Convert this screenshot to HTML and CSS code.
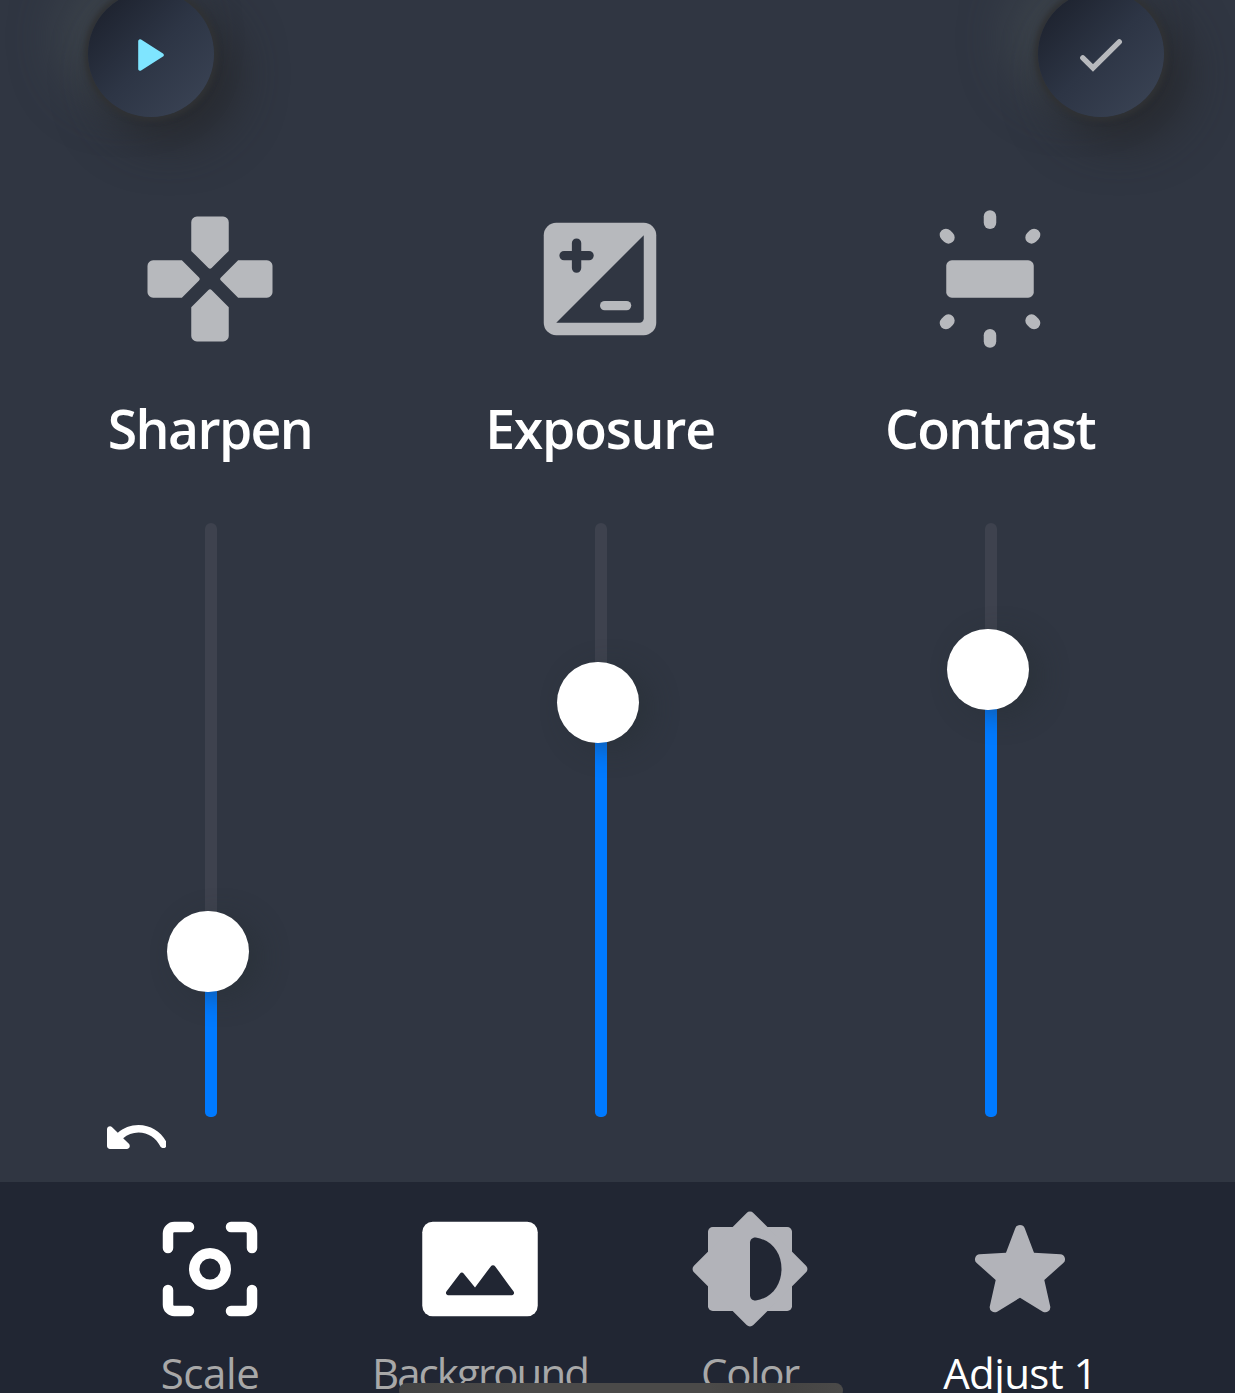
FILE: index.html
```html
<!DOCTYPE html>
<html lang="en">
<head>
<meta charset="utf-8">
<title>Adjust</title>
<link rel="stylesheet" href="styles.css">
</head>
<body>
<main class="editor">
  <header class="toolbar">
    <button class="round-btn" aria-label="Play">
      <svg viewBox="0 0 60 60"><path class="play" d="M17.200 17.100v27.800a1.900 1.900 0 0 0 2.900 1.600l21.900-13.900a1.900 1.900 0 0 0 0-3.200L20.100 15.500a1.900 1.900 0 0 0-2.900 1.600z"/></svg>
    </button>
    <button class="round-btn" aria-label="Done">
      <svg viewBox="0 0 60 60"><path class="check" d="M11.800 33.800 22 44 48.300 17.800"/></svg>
    </button>
  </header>

  <section class="controls">
    <div class="control">
      <svg class="control-icon" viewBox="0 0 24 24">
        <g id="pad"><path id="arm" d="M15 7.5V2.9a.9.9 0 0 0-.9-.9H9.9a.9.9 0 0 0-.9.9v4.6l2.75 2.75a.35.35 0 0 0 .5 0z"/><use href="#arm" transform="rotate(90 12 12)"/></g>
        <use href="#pad" transform="rotate(180 12 12)"/>
      </svg>
      <h2 class="control-name sharpen">Sharpen</h2>
      <div class="slider"><div class="fill" style="height:166px"></div><div class="thumb" style="bottom:125px"></div></div>
    </div>
    <div class="control">
      <svg class="control-icon" viewBox="0 0 24 24">
        <rect x="3" y="3" width="18" height="18" rx="2"/>
        <path class="cut" d="M5 19 19 5v13.3a.7.7 0 0 1-.7.7z"/>
        <path class="cut-line" d="M6.25 8.25h4M8.25 6.25v4"/>
        <rect x="12" y="15.5" width="5" height="1.5" rx=".75"/>
      </svg>
      <h2 class="control-name exposure">Exposure</h2>
      <div class="slider"><div class="fill" style="height:415px"></div><div class="thumb" style="bottom:374px"></div></div>
    </div>
    <div class="control">
      <svg class="control-icon" viewBox="0 0 24 24">
        <rect x="5" y="9" width="14" height="6" rx=".9"/>
        <rect x="11" y="1" width="2" height="3" rx="1"/>
        <rect x="11" y="20" width="2" height="3" rx="1"/>
        <path class="ray" d="m4.95 4.95.4.4M19.05 4.95l-.4.4M4.95 19.05l.4-.4M19.05 19.05l-.4-.4"/>
      </svg>
      <h2 class="control-name contrast">Contrast</h2>
      <div class="slider"><div class="fill" style="height:448px"></div><div class="thumb" style="bottom:407px"></div></div>
    </div>
  </section>

  <div class="undo-row">
    <button class="undo" aria-label="Undo">
      <svg viewBox="0 0 24 24"><path d="M12.5 8c-2.65 0-5.05.99-6.9 2.6L3.71 8.71C3.08 8.08 2 8.52 2 9.41V15c0 .55.45 1 1 1h5.59c.89 0 1.34-1.08.71-1.71l-1.91-1.91c1.39-1.16 3.16-1.88 5.12-1.88 3.16 0 5.89 1.84 7.19 4.5.27.56.91.84 1.5.64.71-.23 1.07-1.04.75-1.72C20.23 10.42 16.65 8 12.5 8z"/></svg>
    </button>
  </div>

  <nav class="tabs">
    <a class="tab bright">
      <svg viewBox="0 0 24 24"><path class="bracket" d="M4 8V5.2A1.2 1.2 0 0 1 5.2 4H8M16 4h2.8A1.2 1.2 0 0 1 20 5.2V8M20 16v2.8a1.2 1.2 0 0 1-1.2 1.2H16M8 20H5.2A1.2 1.2 0 0 1 4 18.8V16"/><circle class="bracket" cx="12" cy="12" r="3"/></svg>
      <span class="scale">Scale</span>
    </a>
    <a class="tab bright">
      <svg viewBox="0 0 24 24"><rect x="1" y="3" width="22" height="18" rx="2"/><path class="cut-nav" d="M5.6 16.3 8.2 12.85a.42.42 0 0 1 .68 0L11.05 15.5 14.05 11.5a.55.55 0 0 1 .85 0L18.4 16.3a.44.44 0 0 1-.3.7H5.9a.44.44 0 0 1-.3-.7z"/></svg>
      <span class="background">Background</span>
    </a>
    <a class="tab">
      <svg viewBox="0 0 24 24"><rect x="4" y="4" width="16" height="16" rx=".9"/><rect x="4" y="4" width="16" height="16" rx=".9" transform="rotate(45 12 12)"/><path class="cut-nav" d="M12 7v10c0 .6.45 1.05 1.1 1C16.3 17.5 18 14.9 18 12S16.3 6.5 13.1 6C12.45 5.95 12 6.4 12 7z"/></svg>
      <span class="color">Color</span>
    </a>
    <a class="tab active">
      <svg viewBox="0 0 24 24"><path d="M9.33 8.9 11.1 4.25a.96.96 0 0 1 1.8 0L14.67 8.9 19.7 9.2a.94.94 0 0 1 .55 1.65L16.63 14.1 17.75 19.1a.95.95 0 0 1-1.4 1.02L12 17.46 7.65 20.12a.95.95 0 0 1-1.4-1.02L7.37 14.1 3.75 10.85A.94.94 0 0 1 4.3 9.2z"/></svg>
      <span class="adjust">Adjust 1</span>
    </a>
  </nav>
  <div class="home-bar"></div>
</main>
</body>
</html>
```
FILE: styles.css
```css
* { box-sizing: border-box; }
body { margin: 0; background: #303642; }
button { border: 0; padding: 0; background: none; }
.editor {
  position: relative;
  width: 1235px;
  height: 1393px;
  overflow: hidden;
  display: flex;
  flex-direction: column;
  background: #303642;
  font-family: "Trebuchet MS", "Open Sans", "Noto Sans", sans-serif;
  color: #fff;
}
.toolbar {
  height: 204px;
  flex: none;
  display: flex;
  justify-content: space-between;
  align-items: flex-start;
  padding: 0 71px 0 88px;
}
.round-btn {
  width: 126px;
  height: 126px;
  margin-top: -9px;
  border-radius: 50%;
  display: grid;
  place-items: center;
  background: linear-gradient(135deg, #1d222e 10%, #2d3545 50%, #394253 90%);
  box-shadow: 0 0 5px 4px #303235, 18px 20px 46px 6px rgba(36, 38, 40, .75), -26px -16px 46px 4px rgba(68, 76, 82, .65);
}
.round-btn svg { width: 60px; height: 60px; }
.play { fill: #7fe5ff; }
.check { fill: none; stroke: #b7b9bd; stroke-width: 5.4; stroke-linecap: round; }

.controls { height: 913px; flex: none; display: flex; padding-left: 15px; }
.control {
  width: 390px;
  display: flex;
  flex-direction: column;
  align-items: center;
}
.control-icon { width: 150px; height: 150px; fill: #b7b9bd; }
.cut { fill: #303642; }
.cut-line { fill: none; stroke: #303642; stroke-width: 1.5; stroke-linecap: round; }
.ray { stroke: #b7b9bd; stroke-width: 2; stroke-linecap: round; }
.control-name {
  margin: 35px 0 1px;
  height: 80px;
  line-height: 80px;
  font-size: 53.5px;
  font-weight: 650;
  white-space: nowrap;
}
.sharpen { letter-spacing: -1.6px; }
.exposure { letter-spacing: -1.2px; }
.contrast { letter-spacing: -1.6px; }
.slider {
  position: relative;
  display: flex;
  align-items: flex-end;
  width: 12px;
  height: 594px;
  margin: 53px 0 0 2px;
  border-radius: 6px;
  background: #3e424e;
}
.fill { width: 12px; border-radius: 0 0 5px 5px; background: #007aff; }
.thumb {
  position: absolute;
  left: -37.7px;
  width: 81.5px;
  height: 81.5px;
  border-radius: 50%;
  background: #fff;
  box-shadow: 12px 6px 28px rgba(38, 46, 50, .45);
}

.undo-row { height: 65px; flex: none; padding-left: 101px; }
.undo { display: block; width: 65px; height: 60px; margin-top: -16px; overflow: hidden; }
.undo svg { display: block; width: 72px; height: 72px; fill: #fff; }

.tabs {
  height: 211px;
  flex: none;
  display: flex;
  padding: 24px 0 0 75px;
  background: #212633;
}
.tab {
  width: 270px;
  display: flex;
  flex-direction: column;
  align-items: center;
  color: #a8a8a8;
}
.tab svg { width: 126px; height: 126px; flex: none; fill: #b2b3b9; }
.tab.bright svg { fill: #fff; }
.tab .bracket { fill: none; stroke: #fff; stroke-width: 2; stroke-linecap: round; }
.tab .cut-nav { fill: #212633; }
.tab span { margin-top: 11px; height: 60px; line-height: 60px; font-size: 42px; white-space: nowrap; }
.scale { letter-spacing: -.4px; }
.background { letter-spacing: -1.9px; }
.color { letter-spacing: -1.4px; }
.adjust { letter-spacing: -.6px; }
.tab.active { color: #fff; }

.home-bar {
  position: absolute;
  left: 399px;
  top: 1383px;
  width: 444px;
  height: 15px;
  border-radius: 8px;
  background: linear-gradient(90deg, #434343, #4b4a49 30%, #4b4a49 70%, #444342 85%, #4b4a49);
}
```
